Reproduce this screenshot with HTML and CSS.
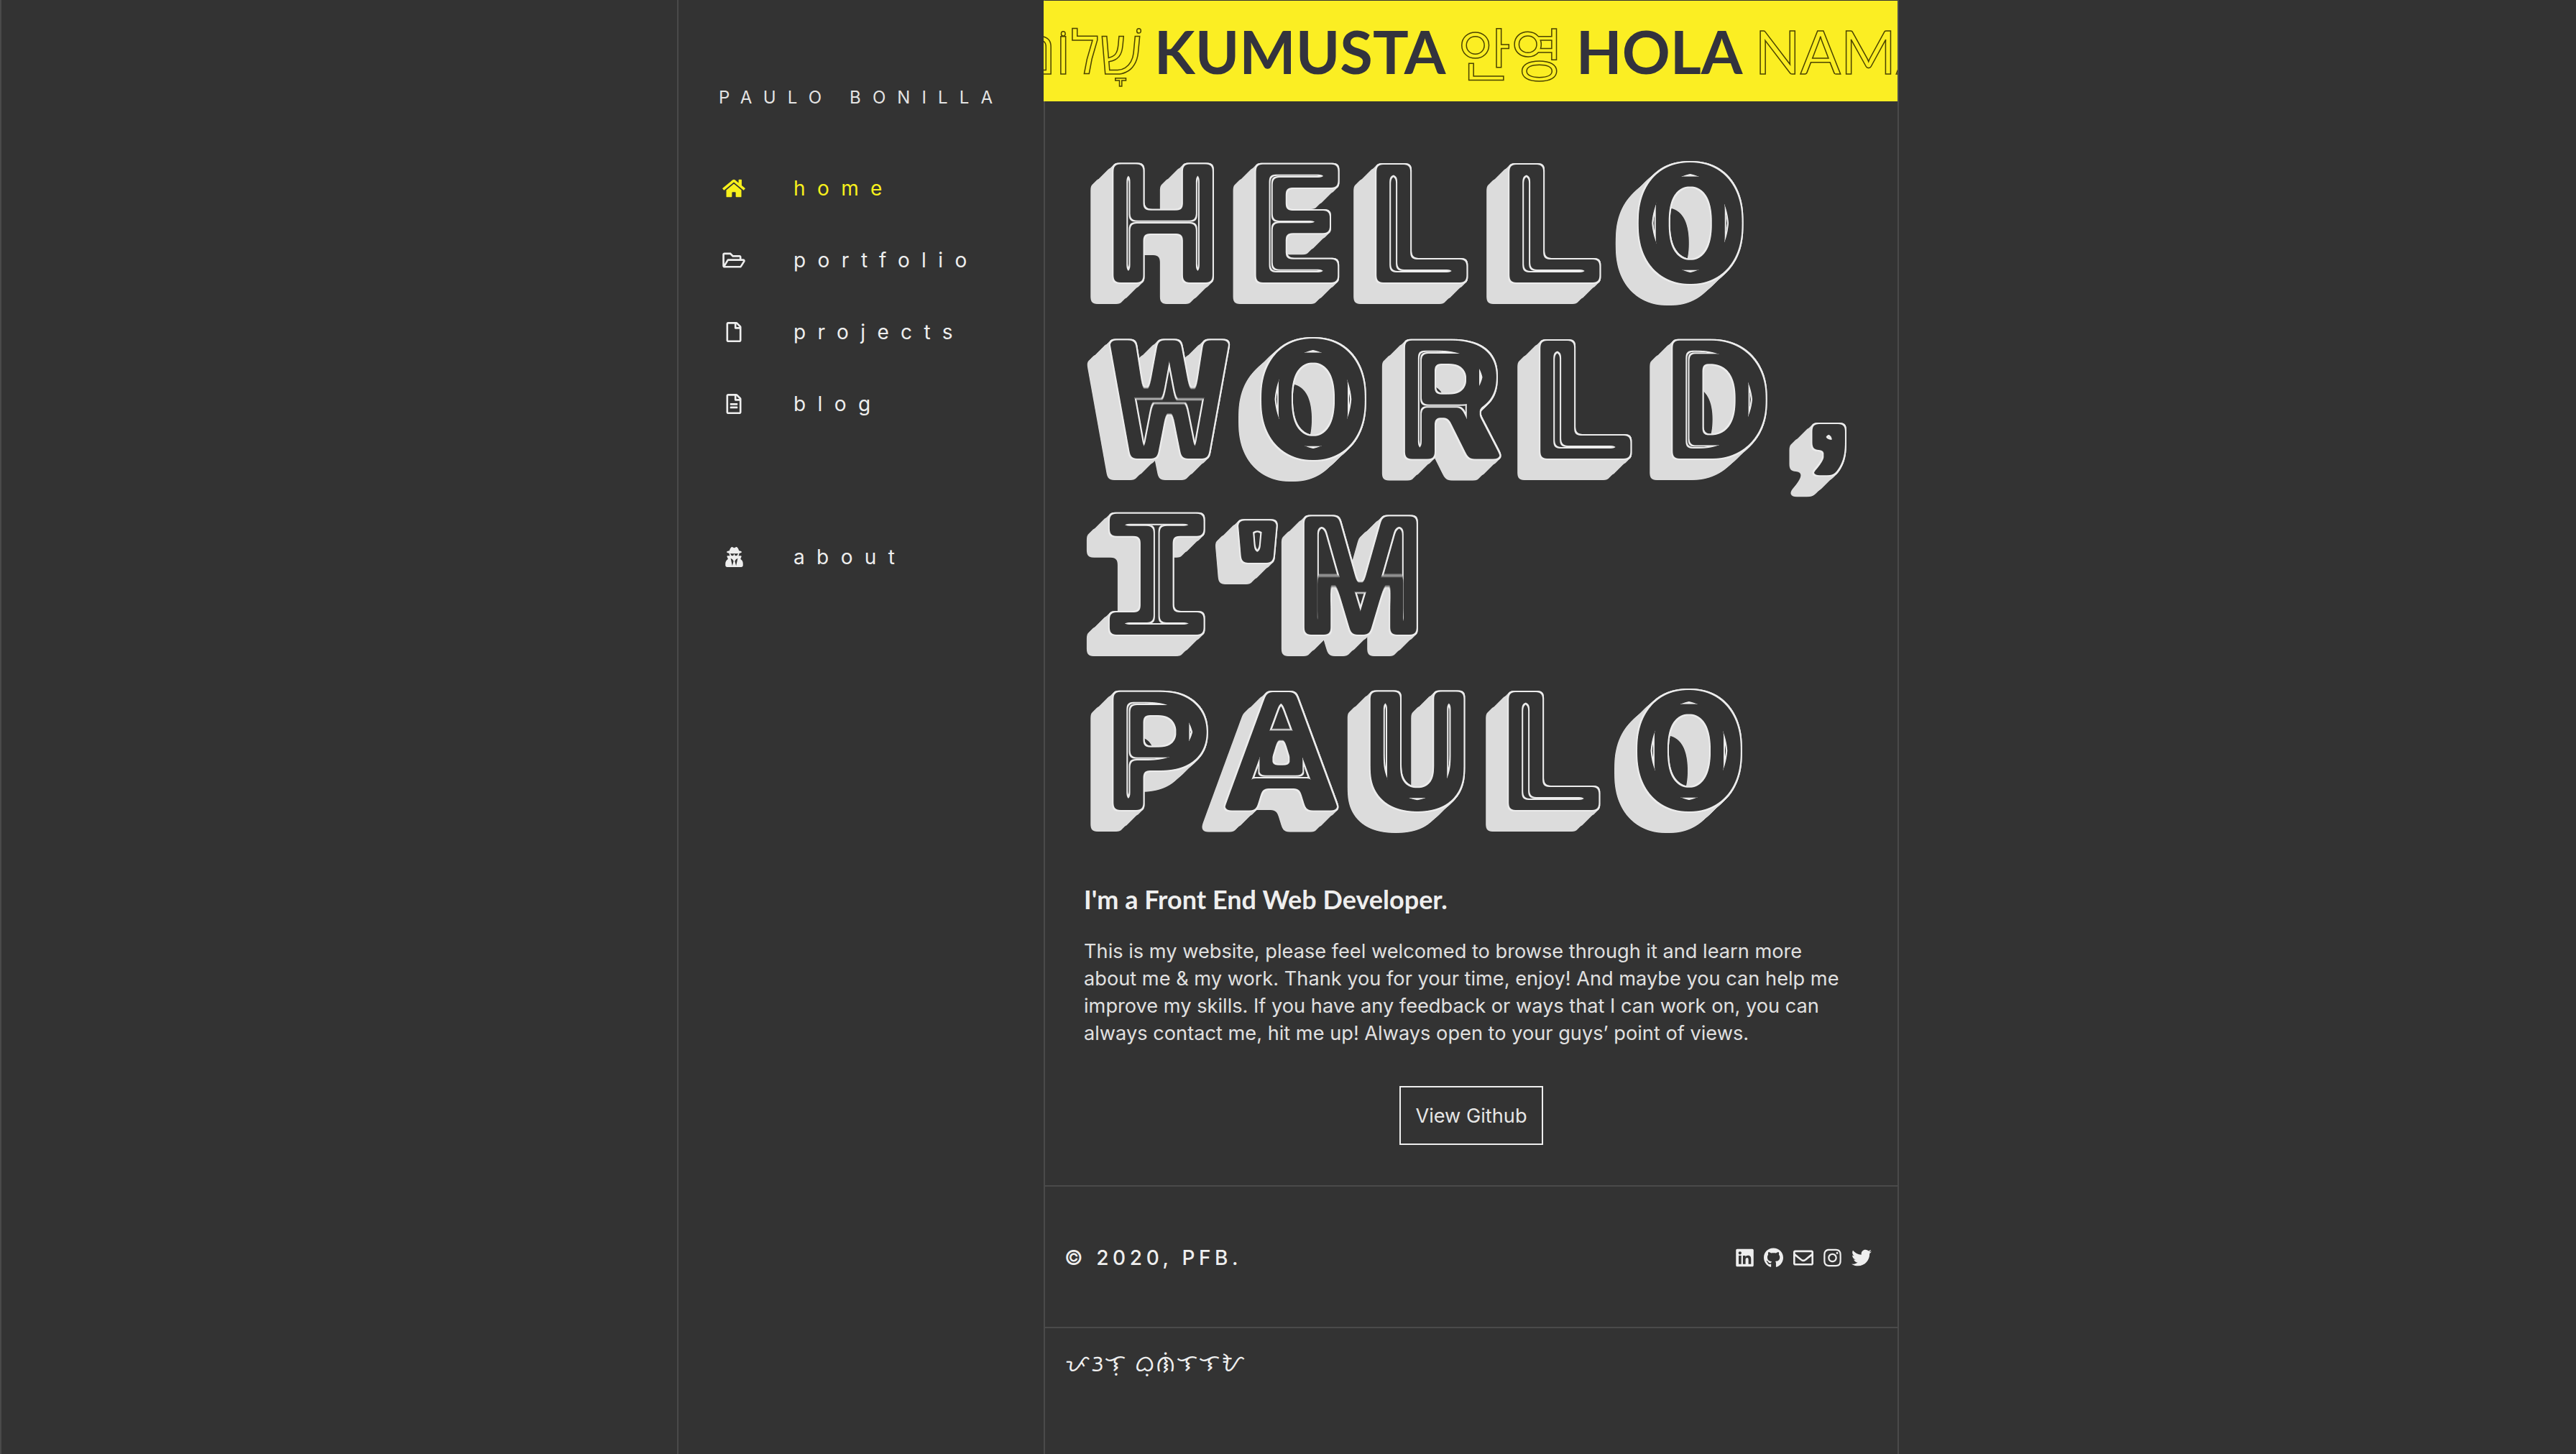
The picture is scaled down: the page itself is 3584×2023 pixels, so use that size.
FILE: index.html
```html
<!DOCTYPE html>
<html lang="en">
<head>
<meta charset="utf-8">
<title>Paulo Bonilla</title>
<link rel="stylesheet" href="styles.css">
</head>
<body>
<svg class="defs" aria-hidden="true" width="0" height="0">
  <filter id="block-letters" x="-6%" y="-4%" width="112%" height="108%" color-interpolation-filters="sRGB">
    <feMorphology in="SourceAlpha" operator="dilate" radius="3" result="fat"/>
    <feGaussianBlur in="fat" stdDeviation="4" result="soft"/>
    <feComponentTransfer in="soft" result="face"><feFuncA type="linear" slope="12" intercept="-5.5"/></feComponentTransfer>
    <feOffset in="face" dx="-2" dy="1.85" result="o1"/>
    <feMerge result="m1"><feMergeNode in="o1"/><feMergeNode in="face"/></feMerge>
    <feOffset in="m1" dx="-4" dy="3.7" result="o2"/>
    <feMerge result="m2"><feMergeNode in="o2"/><feMergeNode in="m1"/></feMerge>
    <feOffset in="m2" dx="-8" dy="7.4" result="o3"/>
    <feMerge result="m3"><feMergeNode in="o3"/><feMergeNode in="m2"/></feMerge>
    <feOffset in="m3" dx="-16" dy="14.8" result="o4"/>
    <feMerge result="ext"><feMergeNode in="o4"/><feMergeNode in="m3"/></feMerge>
    <feFlood flood-color="#dcdcdc"/><feComposite in2="ext" operator="in" result="shade"/>
    <feFlood flood-color="#ececec"/><feComposite in2="face" operator="in" result="outline"/>
    <feMorphology in="face" operator="erode" radius="2" result="inner"/>
    <feFlood flood-color="#333333"/><feComposite in2="inner" operator="in" result="fill"/>
    <feMorphology in="face" operator="erode" radius="20 16" result="e1"/>
    <feMorphology in="face" operator="erode" radius="22 18" result="e2"/>
    <feComposite in="e1" in2="e2" operator="out" result="ring"/>
    <feFlood flood-color="#ececec"/><feComposite in2="ring" operator="in" result="inline"/>
    <feMerge><feMergeNode in="shade"/><feMergeNode in="outline"/><feMergeNode in="fill"/><feMergeNode in="inline"/></feMerge>
  </filter>
</svg>
<div class="page">
  <div class="gutter gutter-left"></div>
  <aside class="sidebar">
    <div class="brand">PAULO BONILLA</div>
    <nav class="nav">
      <a class="nav-item active"><span class="nav-icon"><svg class="i i-576" viewBox="0 0 576 512"><path d="M280.37 148.26L96 300.11V464a16 16 0 0 0 16 16l112.06-.29a16 16 0 0 0 15.92-16V368a16 16 0 0 1 16-16h64a16 16 0 0 1 16 16v95.64a16 16 0 0 0 16 16.05L464 480a16 16 0 0 0 16-16V300L295.67 148.26a12.19 12.19 0 0 0-15.3 0zM571.6 251.47L488 182.56V44.05a12 12 0 0 0-12-12h-56a12 12 0 0 0-12 12v72.61L318.47 43a48 48 0 0 0-61 0L4.34 251.47a12 12 0 0 0-1.6 16.9l25.5 31A12 12 0 0 0 45.15 301l235.22-193.74a12.19 12.19 0 0 1 15.3 0L530.9 301a12 12 0 0 0 16.9-1.6l25.5-31a12 12 0 0 0-1.7-16.93z"/></svg></span>home</a>
      <a class="nav-item"><span class="nav-icon"><svg class="i i-576" viewBox="0 0 576 512"><path d="M527.9 224H480v-48c0-26.5-21.5-48-48-48H272l-64-64H48C21.5 64 0 85.5 0 112v288c0 26.5 21.5 48 48 48h400c16.5 0 31.9-8.5 40.7-22.6l79.9-128c20-31.9-3-73.4-40.7-73.4zM48 118c0-3.3 2.7-6 6-6h134.1l64 64H426c3.3 0 6 2.7 6 6v42H152c-16.8 0-32.4 8.8-41.1 23.2L48 351.4zm400 282H72l77.2-128H528z"/></svg></span>portfolio</a>
      <a class="nav-item"><span class="nav-icon"><svg class="i i-384" viewBox="0 0 384 512"><path d="M369.9 97.9L286 14C277 5 264.8-.1 252.1-.1H48C21.5 0 0 21.5 0 48v416c0 26.5 21.5 48 48 48h288c26.5 0 48-21.5 48-48V131.9c0-12.7-5.1-25-14.1-34zM332.1 128H256V51.9l76.1 76.1zM48 464V48h160v104c0 13.3 10.7 24 24 24h104v288H48z"/></svg></span>projects</a>
      <a class="nav-item"><span class="nav-icon"><svg class="i i-384" viewBox="0 0 384 512"><path d="M288 248v28c0 6.6-5.4 12-12 12H108c-6.6 0-12-5.4-12-12v-28c0-6.6 5.4-12 12-12h168c6.6 0 12 5.4 12 12zm-12 72H108c-6.6 0-12 5.4-12 12v28c0 6.6 5.4 12 12 12h168c6.6 0 12-5.4 12-12v-28c0-6.6-5.4-12-12-12zm108-188.1V464c0 26.5-21.5 48-48 48H48c-26.5 0-48-21.5-48-48V48C0 21.5 21.5 0 48 0h204.1C264.8 0 277 5.1 286 14.1L369.9 98c9 8.9 14.1 21.2 14.1 33.9zm-128-80V128h76.1L256 51.9zM336 464V176H232c-13.3 0-24-10.7-24-24V48H48v416h288z"/></svg></span>blog</a>
      <a class="nav-item nav-about"><span class="nav-icon"><svg class="i i-448" viewBox="0 0 448 512"><path d="M383.9 308.3l23.9-62.6c4-10.5-3.7-21.7-15-21.7h-58.5c11-18.9 17.8-40.6 17.8-64v-.3c39.2-7.8 64-19.1 64-31.7 0-13.3-27.3-25.1-70.1-33-9.2-32.8-27-65.8-40.6-82.8-9.5-11.9-25.9-15.6-39.5-8.8l-27.6 13.8c-9 4.5-19.6 4.5-28.6 0L182.1 3.4c-13.6-6.8-30-3.1-39.5 8.8-13.5 17-31.4 50-40.6 82.8-42.7 7.9-70 19.7-70 33 0 12.6 24.8 23.9 64 31.7v.3c0 23.4 6.8 45.1 17.8 64H56.3c-11.5 0-19.2 11.7-14.7 22.3l25.8 60.2C27.3 329.8 0 372.7 0 422.4v44.8C0 491.9 20.1 512 44.8 512h358.4c24.7 0 44.8-20.1 44.8-44.8v-44.8c0-48.4-25.8-90.4-64.1-114.1zM176 480l-41.6-192 49.6 32 24 40-32 120zm96 0l-32-120 24-40 49.6-32L272 480zm41.7-298.5c-3.9 11.9-7 24.6-16.5 33.4-10.1 9.3-48 22.4-64-25-2.8-8.4-15.4-8.4-18.3 0-17 50.2-56 32.4-64 25-9.5-8.8-12.7-21.5-16.5-33.4-.8-2.5-6.3-5.7-6.3-5.8v-10.8c28.3 3.6 61 5.8 96 5.8s67.7-2.1 96-5.8v10.8c-.1.1-5.6 3.2-6.4 5.8z"/></svg></span>about</a>
    </nav>
  </aside>
  <main class="main">
    <div class="banner">
      <div class="banner-track">
        <span class="word outline" lang="he" dir="rtl">שָׁלוֹם</span>
        <span class="word solid">KUMUSTA</span>
        <span class="word outline korean" lang="ko">안영</span>
        <span class="word solid">HOLA</span>
        <span class="word outline">NAMASTE</span>
      </div>
    </div>
    <section class="hero">
      <h1 class="hero-title">
        <span class="line">HE<span class="ell">L</span><span class="ell">L</span>O</span>
        <span class="line"><span class="double-u">W</span>OR<span class="ell">L</span>D<span class="comma">,</span></span>
        <span class="line"><span class="slab">I</span><span class="apos">'</span><span class="em">M</span></span>
        <span class="line">PAU<span class="ell">L</span>O</span>
      </h1>
      <h2 class="tagline">I'm a Front End Web Developer.</h2>
      <p class="intro">This is my website, please feel welcomed to browse through it and learn more about me &amp; my work. Thank you for your time, enjoy! And maybe you can help me improve my skills. If you have any feedback or ways that I can work on, you can always contact me, hit me up! Always open to your guys’ point of views.</p>
      <div class="cta"><a class="button">View Github</a></div>
    </section>
    <footer class="footer">
      <div class="copyright">© 2020, PFB.</div>
      <div class="socials">
        <svg class="s s-448" viewBox="0 0 448 512"><path d="M416 32H31.9C14.3 32 0 46.5 0 64.3v383.4C0 465.5 14.3 480 31.9 480H416c17.6 0 32-14.5 32-32.3V64.3c0-17.8-14.4-32.3-32-32.3zM135.4 416H69V202.2h66.5V416zm-33.2-243c-21.3 0-38.5-17.3-38.5-38.5S80.9 96 102.2 96c21.2 0 38.5 17.3 38.5 38.5 0 21.3-17.2 38.5-38.5 38.5zm282.1 243h-66.4V312c0-24.8-.5-56.7-34.5-56.7-34.6 0-39.9 27-39.9 54.9V416h-66.4V202.2h63.7v29.2h.9c8.9-16.8 30.6-34.5 62.9-34.5 67.2 0 79.7 44.3 79.7 101.9V416z"/></svg>
        <svg class="s s-496" viewBox="0 0 496 512"><path d="M244.8 8C106.1 8 0 113.3 0 252c0 110.9 69.8 205.8 169.5 239.2 12.8 2.3 17.3-5.6 17.3-12.1 0-6.2-.3-40.4-.3-61.4 0 0-70 15-84.7-29.8 0 0-11.4-29.1-27.8-36.6 0 0-22.9-15.7 1.6-15.4 0 0 24.9 2 38.6 25.8 21.9 38.6 58.6 27.5 72.9 20.9 2.3-16 8.8-27.1 16-33.7-55.9-6.2-112.3-14.3-112.3-110.5 0-27.5 7.6-41.3 23.6-58.9-2.6-6.5-11.1-33.3 2.6-67.9 20.9-6.5 69 27 69 27 20-5.6 41.5-8.5 62.8-8.5s42.8 2.9 62.8 8.5c0 0 48.1-33.6 69-27 13.7 34.7 5.2 61.4 2.6 67.9 16 17.7 25.8 31.5 25.8 58.9 0 96.5-58.9 104.2-114.8 110.5 9.2 7.9 17 22.9 17 46.4 0 33.7-.3 75.4-.3 83.6 0 6.5 4.6 14.4 17.3 12.1C428.2 457.8 496 362.9 496 252 496 113.3 383.5 8 244.8 8z"/></svg>
        <svg class="s s-512" viewBox="0 0 512 512"><path d="M464 64H48C21.49 64 0 85.49 0 112v288c0 26.51 21.49 48 48 48h416c26.51 0 48-21.49 48-48V112c0-26.51-21.49-48-48-48zm0 48v40.805c-22.422 18.259-58.168 46.651-134.587 106.49-16.841 13.247-50.201 45.072-73.413 44.701-23.208.375-56.579-31.459-73.413-44.701C106.18 199.465 70.425 171.067 48 152.805V112h416zM48 400V214.398c22.914 18.251 55.409 43.862 104.938 82.646 21.857 17.205 60.134 55.186 103.062 54.955 42.717.231 80.509-37.199 103.053-54.947 49.528-38.783 82.032-64.401 104.947-82.653V400H48z"/></svg>
        <svg class="s s-448" viewBox="0 0 448 512"><path d="M224.1 141c-63.6 0-114.9 51.3-114.9 114.9s51.3 114.9 114.9 114.9S339 319.5 339 255.9 287.7 141 224.1 141zm0 189.6c-41.1 0-74.7-33.5-74.7-74.7s33.5-74.7 74.7-74.7 74.7 33.5 74.7 74.7-33.6 74.7-74.7 74.7zm146.4-194.3c0 14.9-12 26.8-26.8 26.8-14.9 0-26.8-12-26.8-26.8s12-26.8 26.8-26.8 26.8 12 26.8 26.8zm76.1 27.2c-1.7-35.9-9.9-67.7-36.2-93.9-26.2-26.2-58-34.4-93.9-36.2-37-2.1-147.9-2.1-184.9 0-35.8 1.7-67.6 9.9-93.9 36.1s-34.4 58-36.2 93.9c-2.1 37-2.1 147.9 0 184.9 1.7 35.9 9.9 67.7 36.2 93.9s58 34.4 93.9 36.2c37 2.1 147.9 2.1 184.9 0 35.9-1.7 67.7-9.9 93.9-36.2 26.2-26.2 34.4-58 36.2-93.9 2.1-37 2.1-147.8 0-184.8zM398.8 388c-7.8 19.6-22.9 34.7-42.6 42.6-29.5 11.7-99.5 9-132.1 9s-102.7 2.6-132.1-9c-19.6-7.8-34.7-22.9-42.6-42.6-11.7-29.5-9-99.5-9-132.1s-2.6-102.7 9-132.1c7.8-19.6 22.9-34.7 42.6-42.6 29.5-11.7 99.5-9 132.1-9s102.7-2.6 132.1 9c19.6 7.8 34.7 22.9 42.6 42.6 11.7 29.5 9 99.5 9 132.1s2.7 102.7-9 132.1z"/></svg>
        <svg class="s s-512" viewBox="0 0 512 512"><path d="M459.37 151.716c.325 4.548.325 9.097.325 13.645 0 138.72-105.583 298.558-298.558 298.558-59.452 0-114.68-17.219-161.137-47.106 8.447.974 16.568 1.299 25.34 1.299 49.055 0 94.213-16.568 130.274-44.832-46.132-.975-84.792-31.188-98.112-72.772 6.498.974 12.995 1.624 19.818 1.624 9.421 0 18.843-1.3 27.614-3.573-48.081-9.747-84.143-51.98-84.143-102.985v-1.299c13.969 7.797 30.214 12.67 47.431 13.319-28.264-18.843-46.781-51.005-46.781-87.391 0-19.492 5.197-37.36 14.294-52.954 51.655 63.675 129.3 105.258 216.365 109.807-1.624-7.797-2.599-15.918-2.599-24.04 0-57.828 46.782-104.934 104.934-104.934 30.213 0 57.502 12.67 76.67 33.137 23.715-4.548 46.456-13.32 66.599-25.34-7.798 24.366-24.366 44.833-46.132 57.827 21.117-2.273 41.584-8.122 60.426-16.243-14.292 20.791-32.161 39.308-52.628 54.253z"/></svg>
      </div>
    </footer>
    <div class="signature" lang="tl">ᜉᜂᜎᜓ ᜊᜓᜈᜒᜎᜎᜀ</div>
  </main>
  <div class="gutter"></div>
</div>
</body>
</html>
```
FILE: styles.css
```css
* { box-sizing: border-box; }
html, body { margin: 0; height: 100%; }
body {
  background: #333333;
  color: #e6e6e6;
  font-family: Inter, "Liberation Sans", sans-serif;
  overflow: hidden;
}
.defs { position: absolute; }
.page {
  display: grid;
  grid-template-columns: 942px 510px 1190px 1fr;
  height: 2023px;
}
.gutter-left { border-left: 2px solid #4a4a4a; }
.sidebar {
  border-left: 2px solid #4a4a4a;
  padding: 121px 0 0 56px;
}
.brand {
  font-size: 24px;
  font-weight: 400;
  line-height: 30px;
  letter-spacing: 16.1px;
  color: #e4e4e4;
  white-space: nowrap;
}
.nav {
  display: flex;
  flex-direction: column;
  margin-top: 61px;
}
.nav-item {
  display: flex;
  align-items: center;
  height: 100px;
  font-size: 28px;
  letter-spacing: 16.4px;
  color: #eeeeee;
}
.nav-item.active { color: #f7f01c; }
.nav-about { margin-top: 113px; }
.nav-icon {
  display: flex;
  justify-content: center;
  width: 44px;
  margin-right: 61px;
  margin-left: -1px;
}
.i { height: 28px; fill: currentColor; display: block; }
.i-576 { width: 32px; }
.i-448 { width: 25px; }
.i-384 { width: 24px; }
.main {
  display: flex;
  flex-direction: column;
  padding-top: 1px;
  border-left: 2px solid #4a4a4a;
  border-right: 2px solid #4a4a4a;
  min-width: 0;
}
.banner {
  height: 140px;
  margin-left: -2px;
  background: #fbee23;
  overflow: hidden;
  display: flex;
  align-items: center;
}
.banner-track {
  display: flex;
  align-items: center;
  gap: 17px;
  margin-left: -35px;
  flex: none;
  white-space: nowrap;
  font-family: Lato, "Open Sans", sans-serif;
  font-weight: 700;
  font-size: 83px;
  line-height: 100px;
  color: #33333d;
}
.word { flex: none; }
.outline {
  color: transparent;
  -webkit-text-stroke: 1.5px #4a4200;
  font-weight: 400;
}
.korean { font-family: "Noto Sans CJK KR", sans-serif; font-size: 80px; }
.hero {
  padding: 0 54px;
  flex: none;
  height: 1508px;
}
.hero-title {
  margin: 51px 0 0 30px;
  font-family: Roboto, "Liberation Sans", sans-serif;
  font-weight: 900;
  font-size: 228px;
  line-height: 244px;
  letter-spacing: 38px;
  color: #ffffff;
  filter: url(#block-letters);
}
.line { display: block; white-space: nowrap; }
.ell,
.double-u,
.em,
.slab,
.apos,
.comma {
  display: inline-block;
  transform-origin: left center;
}
.ell {
  transform: scaleX(1.15);
  margin-right: 24px;
}
.double-u {
  transform: scaleX(0.85);
  margin: 0 -31px 0 5px;
}
.em {
  transform: scaleX(0.88);
}
.slab {
  font-family: "DejaVu Sans Mono", monospace;
  font-weight: 700;
  letter-spacing: 0;
  transform: scaleX(1.3);
  margin: 0 46px 0 -18px;
}
.apos {
  font-family: "Liberation Sans", sans-serif;
  font-weight: 700;
  letter-spacing: 0;
  transform: scaleX(1.7);
  margin-right: 47px;
}
.comma {
  font-family: "Liberation Sans", sans-serif;
  font-weight: 700;
  transform: scaleX(1.35) translateY(-12px);
}
.tagline {
  margin: 59px 0 0;
  font-family: Lato, sans-serif;
  font-weight: 700;
  font-size: 36px;
  line-height: 44px;
  color: #eeeeee;
}
.intro {
  margin: 32px 0 0;
  font-family: Inter, sans-serif;
  font-size: 27.2px;
  line-height: 38px;
  color: #e0e0e0;
}
.cta { display: flex; justify-content: center; margin-top: 54px; }
.button {
  display: flex;
  align-items: center;
  justify-content: center;
  width: 200px;
  height: 82px;
  border: 2px solid #eeeeee;
  font-family: Inter, sans-serif;
  font-size: 27.2px;
  color: #e6e6e6;
}
.footer {
  display: flex;
  align-items: center;
  justify-content: space-between;
  height: 199px;
  padding: 3px 36px 0 27px;
  border-top: 2px solid #4a4a4a;
  border-bottom: 2px solid #4a4a4a;
}
.copyright {
  font-family: Inter, sans-serif;
  font-size: 28px;
  font-weight: 500;
  letter-spacing: 5.6px;
  color: #eeeeee;
}
.socials { display: flex; align-items: center; gap: 14px; }
.s { height: 28px; fill: #eeeeee; display: block; }
.s-448 { width: 25px; }
.s-496 { width: 27px; }
.s-512 { width: 28px; }
.signature {
  padding: 29px 28px;
  font-size: 32px;
  line-height: 40px;
  letter-spacing: 2px;
  color: #eeeeee;
}
```
